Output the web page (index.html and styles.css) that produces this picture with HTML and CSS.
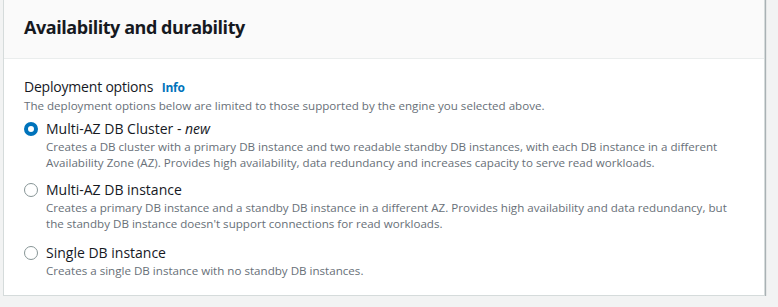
FILE: index.html
```html
<!DOCTYPE html>
<html lang="en">
<head>
    <meta charset="utf-8">
    <title>Availability and durability</title>
    <link rel="stylesheet" href="styles.css">
</head>
<body>
    <div class="panel">
        <div class="panel-header">
            <h2>Availability and durability</h2>
        </div>
        <div class="panel-body">
            <div class="field-label">Deployment options <a class="info" href="#">Info</a></div>
            <div class="field-desc">The deployment options below are limited to those supported by the engine you selected above.</div>

            <div class="option">
                <span class="radio checked"></span>
                <div class="option-text">
                    <div class="option-label">Multi-AZ DB Cluster - <em>new</em></div>
                    <div class="option-desc">Creates a DB cluster with a primary DB instance and two readable standby DB instances, with each DB instance in a different Availability Zone (AZ). Provides high availability, data redundancy and increases capacity to serve read workloads.</div>
                </div>
            </div>

            <div class="option">
                <span class="radio"></span>
                <div class="option-text">
                    <div class="option-label">Multi-AZ DB instance</div>
                    <div class="option-desc">Creates a primary DB instance and a standby DB instance in a different AZ. Provides high availability and data redundancy, but the standby DB instance doesn't support connections for read workloads.</div>
                </div>
            </div>

            <div class="option last">
                <span class="radio"></span>
                <div class="option-text">
                    <div class="option-label">Single DB instance</div>
                    <div class="option-desc">Creates a single DB instance with no standby DB instances.</div>
                </div>
            </div>
        </div>
    </div>
</body>
</html>
```

FILE: styles.css
```css
* {
    margin: 0;
    padding: 0;
    box-sizing: border-box;
}

body {
    background: #f2f3f3;
    font-family: "Open Sans", "Noto Sans", sans-serif;
    color: #16191f;
}

.panel {
    margin: -2px 0 0 3px;
    width: 762px;
    background: #fff;
    border: 1px solid #d5dbdb;
    box-shadow: 1px 1px 1px rgba(0, 28, 36, 0.3);
}

.panel-header {
    background: #fafafa;
    border-bottom: 1px solid #eaeded;
    padding: 17px 20px 20px;
}

.panel-header h2 {
    font-size: 18px;
    line-height: 22px;
    font-weight: 700;
    letter-spacing: -0.45px;
}

.panel-body {
    padding: 18px 20px 16px;
}

.field-label {
    font-size: 14px;
    line-height: 20px;
    letter-spacing: -0.2px;
}

.info {
    margin-left: 5px;
    font-size: 12px;
    font-weight: 700;
    color: #0073bb;
    text-decoration: none;
}

.field-desc,
.option-desc {
    font-size: 11.6px;
    line-height: 16px;
    color: #687078;
}

.option {
    display: flex;
    gap: 8px;
    margin-top: 9px;
}

.field-desc + .option {
    margin-top: 5px;
}

.option.last {
    margin-top: 11px;
}

.radio {
    flex: none;
    width: 14px;
    height: 14px;
    margin-top: 3px;
    border: 1.5px solid #879596;
    border-radius: 50%;
}

.radio.checked {
    border: 4px solid #0073bb;
}

.option-label {
    font-size: 14px;
    line-height: 20px;
}
```
